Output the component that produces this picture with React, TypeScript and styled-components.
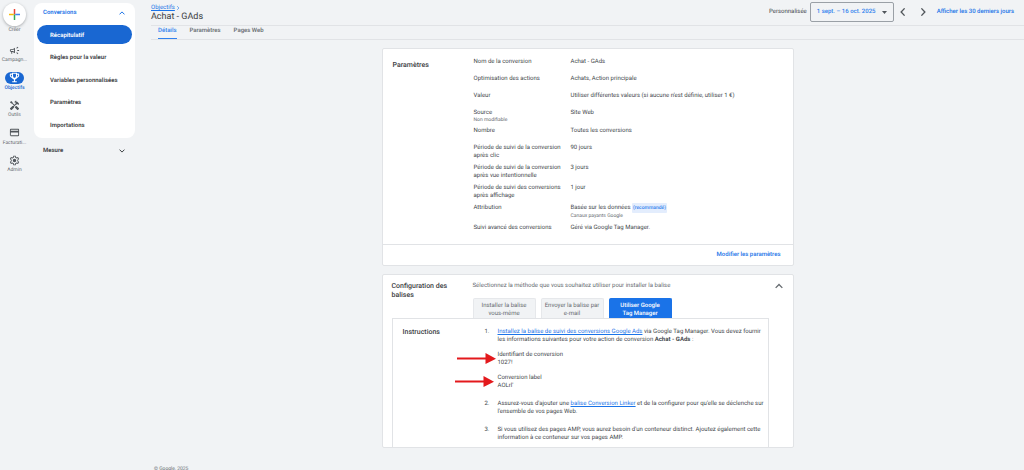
import React from 'react';
import styled, { createGlobalStyle, css } from 'styled-components';

const color = {
  page: '#f1f3f5',
  card: '#ffffff',
  line: '#e1e3e6',
  text: '#44484c',
  strong: '#3c4043',
  muted: '#666b70',
  link: '#3081ee',
  primary: '#1967d2',
  accent: '#1a73e8',
};

const GlobalStyle = createGlobalStyle`
  * { box-sizing: border-box; }
  body {
    margin: 0;
    background: ${color.page};
    color: ${color.text};
    font: 400 6px/8px Roboto, "Liberation Sans", sans-serif;
    text-rendering: geometricPrecision;
  }
  button { font: inherit; color: inherit; border: 0; padding: 0; background: none; cursor: pointer; text-rendering: inherit; }
  h1, h2, p, dl, dd, ol, ul { margin: 0; padding: 0; }
  ul, ol { list-style: none; }
  svg { display: block; }
`;

const Shell = styled.div`
  display: flex;
  height: 100vh;
  overflow: hidden;
`;

const Rail = styled.nav`
  flex: none;
  width: 29px;
  display: flex;
  flex-direction: column;
  align-items: center;
  padding-top: 3px;
`;

const CreateButton = styled.button`
  display: flex;
  flex-direction: column;
  align-items: center;
  gap: 1px;
  font-size: 5px;
  line-height: 7px;
  color: ${color.muted};
`;

const CreateDisc = styled.span`
  display: grid;
  place-items: center;
  width: 23px;
  height: 23px;
  border-radius: 50%;
  background: ${color.card};
  box-shadow: 0 1px 3px rgba(60, 64, 67, 0.4);
`;

const RailList = styled.ul`
  display: flex;
  flex-direction: column;
  justify-content: space-between;
  height: 130px;
  margin-top: 10px;
`;

const RailLink = styled.a<{ $active?: boolean }>`
  display: flex;
  flex-direction: column;
  align-items: center;
  gap: 1px;
  font-size: 5px;
  line-height: 7px;
  font-weight: ${p => (p.$active ? 500 : 400)};
  color: ${p => (p.$active ? color.primary : color.muted)};
  text-decoration: none;
`;

const RailPill = styled.span<{ $active?: boolean }>`
  display: grid;
  place-items: center;
  width: 19px;
  height: 12px;
  border-radius: 6px;
  background: ${p => (p.$active ? color.primary : 'transparent')};
  color: ${p => (p.$active ? '#fff' : '#50555a')};
`;

const Side = styled.aside`
  flex: none;
  width: 101px;
  margin: 3px 16px 0 5px;
  font-weight: 600;
`;

const SidePanel = styled.section`
  height: 135px;
  padding: 0 3px;
  border-radius: 8px;
  background: ${color.card};
`;

const SideHead = styled.button<{ $open?: boolean }>`
  display: flex;
  width: 100%;
  align-items: center;
  justify-content: space-between;
  height: 19px;
  padding: 1px 7px 0 6px;
  font-weight: 600;
  color: ${p => (p.$open ? color.accent : color.strong)};
`;

const SideGroup = styled.div`
  padding: 3px 3px 0;
`;

const SideList = styled.ul`
  display: flex;
  flex-direction: column;
  justify-content: space-between;
  height: 109px;
  margin-top: 3px;
`;

const SideLink = styled.a<{ $active?: boolean }>`
  display: flex;
  align-items: center;
  height: 19px;
  padding: 2px 0 0 13px;
  border-radius: 10px;
  text-decoration: none;
  color: ${color.strong};
  ${p => p.$active && css`
    background: ${color.primary};
    color: #fff;
  `}
`;

const Main = styled.main`
  flex: 1;
  min-width: 0;
`;

const TopBar = styled.header`
  display: flex;
  justify-content: space-between;
  height: 26px;
  border-bottom: 1px solid ${color.line};
`;

const Heading = styled.div`
  padding-top: 4px;
`;

const Crumb = styled.div`
  display: flex;
  align-items: center;
  gap: 1px;
  line-height: 7px;
  color: ${color.link};
`;

const Title = styled.h1`
  padding-top: 1px;
  font: 400 9px/11px Roboto, sans-serif;
  color: ${color.strong};
`;

const DateTools = styled.div`
  display: flex;
  align-items: flex-start;
  padding: 2px 10px 0 0;
  line-height: 20px;
`;

const DateButton = styled.button`
  display: flex;
  align-items: center;
  justify-content: space-between;
  width: 84px;
  height: 20px;
  margin: 0 3px;
  padding: 0 6px;
  border: 1px solid #9aa0a6;
  border-radius: 2px;
  font-weight: 500;
  color: ${color.link};
`;

const StepButton = styled.button`
  display: grid;
  place-items: center;
  width: 12px;
  height: 20px;
  margin-right: 8px;
  color: #50555a;
`;

const TextLink = styled.a`
  font-weight: 500;
  text-decoration: none;
  color: ${color.accent};
`;

const InlineLink = styled.a`
  color: ${color.accent};
`;

const Tabs = styled.nav`
  display: flex;
  gap: 13px;
  height: 14px;
  padding-left: 7px;
  border-bottom: 1px solid ${color.line};
`;

const Tab = styled.a<{ $active?: boolean }>`
  height: 13px;
  padding-top: 1px;
  font-weight: 500;
  text-decoration: none;
  color: ${p => (p.$active ? color.link : color.muted)};
  border-bottom: 1px solid ${p => (p.$active ? color.link : 'transparent')};
`;

const Cards = styled.div`
  display: flex;
  flex-direction: column;
  gap: 8px;
  width: 100%;
  max-width: 412px;
  margin: 8px auto 0;
`;

const Card = styled.section`
  border: 1px solid ${color.line};
  border-radius: 2px;
  background: ${color.card};
`;

const CardBody = styled.div`
  display: grid;
  grid-template-columns: 81px 1fr;
  padding: 9px 9px 0 10px;
`;

const CardTitle = styled.h2`
  padding-right: 16px;
  font: 500 7px/9px Roboto, sans-serif;
  color: ${color.strong};
`;

const ParamTitle = styled(CardTitle)`
  padding-top: 3px;
`;

const Params = styled.dl`
  padding-bottom: 3px;
`;

const Param = styled.div`
  display: grid;
  grid-template-columns: 92px 1fr;
  column-gap: 5px;
  min-height: 17px;
  padding-bottom: 4px;
`;

const Note = styled.div<{ $tall?: boolean }>`
  font-size: 5px;
  line-height: ${p => (p.$tall ? 8 : 6)}px;
  color: ${color.muted};
`;

const Chip = styled.span`
  padding: 2px 1px;
  border-radius: 1px;
  background: #e3edfd;
  color: ${color.link};
  font-size: 5px;
  font-weight: 500;
`;

const CardFoot = styled.footer`
  display: flex;
  align-items: center;
  justify-content: flex-end;
  height: 21px;
  padding: 0 12px;
  border-top: 1px solid ${color.line};
`;

const SetupHead = styled.div`
  display: flex;
  justify-content: space-between;
  line-height: 8px;
  padding-right: 1px;
  color: ${color.muted};
`;

const SetupBody = styled(CardBody)`
  padding: 7px 9px 0;
`;

const Methods = styled.div`
  display: flex;
  gap: 5px;
  margin-top: 8px;
`;

const Method = styled.button<{ $active?: boolean }>`
  width: 63px;
  height: 20px;
  padding: 3px 2px 0;
  border-radius: 2px 2px 0 0;
  line-height: 8px;
  text-align: center;
  border: 1px solid ${p => (p.$active ? color.accent : '#e6e8eb')};
  border-bottom: 0;
  background: ${p => (p.$active ? color.accent : color.page)};
  color: ${p => (p.$active ? '#fff' : color.muted)};
  font-weight: ${p => (p.$active ? 500 : 400)};
`;

const Instructions = styled.div`
  display: grid;
  grid-template-columns: 82px 1fr;
  margin: 0 24px 0 9px;
  padding: 9px 0 5px 10px;
  border: 1px solid ${color.line};
  border-bottom: 0;
`;

const Steps = styled.ol`
  display: flex;
  flex-direction: column;
  gap: 10px;
`;

const Step = styled.li`
  display: grid;
  grid-template-columns: 13px 1fr;
`;

const Field = styled.div`
  position: relative;
  margin-top: 7px;
`;

const Pointer = styled.svg<{ $shift: number }>`
  position: absolute;
  top: 2px;
  left: ${p => p.$shift}px;
`;

const Copyright = styled.footer`
  margin: 18px 0 0 3px;
  font-size: 5px;
  line-height: 7px;
  color: ${color.muted};
`;

const Chevron = ({ d, w = 6, h = 6 }: { d: string; w?: number; h?: number }) => (
  <svg width={w} height={h} viewBox="0 0 6 6" fill="none" stroke="currentColor" strokeWidth="1" aria-hidden="true">
    <path d={d} />
  </svg>
);
const UP = 'M.5 4.4 3 1.9l2.5 2.5';
const DOWN = 'M.5 1.6 3 4.1l2.5-2.5';
const LEFT = 'M4.2.3 1.6 3l2.6 2.7';
const RIGHT = 'M1.8.3 4.4 3 1.8 5.7';

const Glyph = ({ d }: { d: string }) => (
  <svg width="11" height="11" viewBox="0 0 24 24" fill="currentColor" aria-hidden="true">
    <path fillRule="evenodd" d={d} />
  </svg>
);

const railItems = [
  {
    label: 'Campagn...',
    d: 'M18 11v2h4v-2h-4zm-2 6.6c1 .7 2.200 1.650 3.200 2.400.4-.53.8-1.070 1.200-1.600-1-.75-2.240-1.700-3.200-2.400-.4.54-.8 1.080-1.200 1.600zM20.400 5.600 19.200 4c-1 .75-2.240 1.700-3.200 2.400l1.200 1.600c1-.7 2.240-1.650 3.200-2.400zM4 9c-1.100 0-2 .9-2 2v2c0 1.100.9 2 2 2h1v4h2v-4h1l5 3V6L8 9H4zm5.030 1.710L11 9.530v4.940l-1.970-1.180-.48-.29H4v-2h4.550l.48-.29z',
  },
  {
    label: 'Objectifs',
    active: true,
    d: 'M20 3.500h-2.500V1.500h-11v2H4c-1.300 0-2.300 1-2.300 2.300v1.500c0 2.900 2.100 5.200 4.900 5.600.8 1.700 2.400 3 4.200 3.400V20H7v2.500h10V20h-3.800v-3.700c1.800-.4 3.400-1.700 4.200-3.400 2.800-.4 4.900-2.700 4.900-5.600V5.800c0-1.300-1-2.300-2.300-2.300zM4 7.300V5.800h2.500v4.500C5 9.900 4 8.700 4 7.300zm6.500 5.200L8.800 9V4h6.400v5l-1.700 3.500zM20 7.300c0 1.400-1 2.600-2.500 3V5.800H20z',
  },
  {
    label: 'Outils',
    d: 'm21.670 18.170-5.300-5.300h-.99l-2.540 2.540v.99l5.300 5.300c.39.39 1.020.39 1.410 0l2.120-2.120c.39-.38.39-1.020 0-1.410zM17.340 10.190l1.410-1.410 2.120 2.120c1.170-1.170 1.170-3.070 0-4.240l-3.540-3.540-1.410 1.410V1.710L15.220 1l-3.540 3.540.71.71h2.830l-1.410 1.410 1.060 1.060-2.890 2.890-4.130-4.130V5.060L4.830 2.040 2 4.870 5.030 7.900h1.410l4.130 4.130-.85.85H7.600l-5.300 5.300c-.39.39-.39 1.020 0 1.410l2.120 2.120c.39.39 1.020.39 1.410 0l5.300-5.300v-2.120l5.150-5.150 1.060 1.050z',
  },
  {
    label: 'Facturati...',
    d: 'M20 4H4c-1.110 0-2 .89-2 2v12c0 1.110.89 2 2 2h16c1.110 0 2-.89 2-2V6c0-1.110-.89-2-2-2zm0 14H4v-6h16v6zm0-10H4V6h16v2z',
  },
  {
    label: 'Admin',
    d: 'M9.500 1.500h5l.7 3 1.500.9 3-.9 2.500 4.300-2.300 2.100v2.200l2.300 2.100-2.500 4.300-3-.9-1.500.9-.7 3h-5l-.7-3-1.500-.9-3 .9-2.500-4.300 2.300-2.100v-2.200L1.800 8.800l2.500-4.300 3 .9 1.500-.9zM11 3.500l-.6 2.600-3 1.700-2.400-.7-1 1.700 1.900 1.700v3l-1.900 1.700 1 1.700 2.400-.7 3 1.700.6 2.600h2l.6-2.600 3-1.700 2.400.7 1-1.700-1.900-1.700v-3L20 8.800l-1-1.700-2.400.7-3-1.700-.6-2.600zM12 8.200a3.800 3.800 0 1 1 0 7.600 3.800 3.800 0 0 1 0-7.600z',
  },
];

const sideItems = ['Récapitulatif', 'Règles pour la valeur', 'Variables personnalisées', 'Paramètres', 'Importations'];

const params: { label: string; note?: string; value: React.ReactNode }[] = [
  { label: 'Nom de la conversion', value: 'Achat - GAds' },
  { label: 'Optimisation des actions', value: 'Achats, Action principale' },
  { label: 'Valeur', value: "Utiliser différentes valeurs (si aucune n'est définie, utiliser 1 €)" },
  { label: 'Source', note: 'Non modifiable', value: 'Site Web' },
  { label: 'Nombre', value: 'Toutes les conversions' },
  { label: 'Période de suivi de la conversion après clic', value: '90 jours' },
  { label: 'Période de suivi de la conversion après vue intentionnelle', value: '3 jours' },
  { label: 'Période de suivi des conversions après affichage', value: '1 jour' },
  {
    label: 'Attribution',
    value: (
      <>
        Basée sur les données <Chip>(recommandé)</Chip>
        <Note $tall>Canaux payants Google</Note>
      </>
    ),
  },
  { label: 'Suivi avancé des conversions', value: 'Géré via Google Tag Manager.' },
];

const Arrow = ({ shift }: { shift: number }) => (
  <Pointer $shift={shift} width="39" height="12" viewBox="0 0 39 12" aria-hidden="true">
    <path d="M0 5.500h29" stroke="#e3191c" strokeWidth="2" />
    <path d="M28.500 0 39 5.700 28.500 11z" fill="#e3191c" />
  </Pointer>
);

export default function App() {
  return (
    <>
      <GlobalStyle />
      <Shell>
        <Rail aria-label="Navigation principale">
          <CreateButton>
            <CreateDisc>
              <svg width="11" height="11" viewBox="0 0 11 11" aria-hidden="true">
                <path d="M4.750 0h1.500v5.500h-1.500z" fill="#ea4335" />
                <path d="M0 4.750h4.750v1.500H0z" fill="#fbbc04" />
                <path d="M4.750 5.500h1.500V11h-1.500z" fill="#34a853" />
                <path d="M6.250 4.750H11v1.500H6.250z" fill="#4285f4" />
              </svg>
            </CreateDisc>
            Créer
          </CreateButton>
          <RailList>
            {railItems.map(item => (
              <li key={item.label}>
                <RailLink href="#" $active={item.active}>
                  <RailPill $active={item.active}>
                    <Glyph d={item.d} />
                  </RailPill>
                  {item.label}
                </RailLink>
              </li>
            ))}
          </RailList>
        </Rail>

        <Side>
          <SidePanel>
            <SideHead $open aria-expanded="true">
              Conversions
              <Chevron d={UP} />
            </SideHead>
            <SideList>
              {sideItems.map((label, i) => (
                <li key={label}>
                  <SideLink href="#" $active={i === 0}>{label}</SideLink>
                </li>
              ))}
            </SideList>
          </SidePanel>
          <SideGroup>
            <SideHead aria-expanded="false">
              Mesure
              <Chevron d={DOWN} />
            </SideHead>
          </SideGroup>
        </Side>

        <Main>
          <TopBar>
            <Heading>
              <Crumb>
                <InlineLink href="#">Objectifs</InlineLink>
                <Chevron d={RIGHT} w={4} h={4} />
              </Crumb>
              <Title>Achat - GAds</Title>
            </Heading>
            <DateTools>
              Personnalisée
              <DateButton>
                1 sept. – 16 oct. 2025
                <svg width="5" height="3" viewBox="0 0 5 3" aria-hidden="true">
                  <path d="M0 0h5L2.500 3z" fill="#50555a" />
                </svg>
              </DateButton>
              <StepButton aria-label="Période précédente"><Chevron d={LEFT} w={8} h={8} /></StepButton>
              <StepButton aria-label="Période suivante"><Chevron d={RIGHT} w={8} h={8} /></StepButton>
              <TextLink href="#">Afficher les 30 derniers jours</TextLink>
            </DateTools>
          </TopBar>
          <Tabs>
            <Tab href="#" $active>Détails</Tab>
            <Tab href="#">Paramètres</Tab>
            <Tab href="#">Pages Web</Tab>
          </Tabs>

          <Cards>
            <Card>
              <CardBody>
                <ParamTitle>Paramètres</ParamTitle>
                <Params>
                  {params.map(p => (
                    <Param key={p.label}>
                      <dt>
                        {p.label}
                        {p.note && <Note>{p.note}</Note>}
                      </dt>
                      <dd>{p.value}</dd>
                    </Param>
                  ))}
                </Params>
              </CardBody>
              <CardFoot>
                <TextLink href="#">Modifier les paramètres</TextLink>
              </CardFoot>
            </Card>

            <Card>
              <SetupBody>
                <CardTitle>Configuration des balises</CardTitle>
                <div>
                  <SetupHead>
                    Sélectionnez la méthode que vous souhaitez utiliser pour installer la balise
                    <button aria-label="Réduire"><Chevron d={UP} w={8} h={8} /></button>
                  </SetupHead>
                  <Methods>
                    <Method>Installer la balise<br />vous-même</Method>
                    <Method>Envoyer la balise par<br />e-mail</Method>
                    <Method $active>Utiliser Google<br />Tag Manager</Method>
                  </Methods>
                </div>
              </SetupBody>
              <Instructions>
                <CardTitle>Instructions</CardTitle>
                <Steps>
                  <Step>
                    <span>1.</span>
                    <div>
                      <p>
                        <InlineLink href="#">Installez la balise de suivi des conversions Google Ads</InlineLink> via
                        Google Tag Manager. Vous devez fournir<br />
                        les informations suivantes pour votre action de conversion <b>Achat - GAds</b> :
                      </p>
                      <Field>
                        <Arrow shift={-41} />
                        <p>Identifiant de conversion</p>
                        <p>1027!</p>
                      </Field>
                      <Field>
                        <Arrow shift={-43} />
                        <p>Conversion label</p>
                        <p>AOLrl'</p>
                      </Field>
                    </div>
                  </Step>
                  <Step>
                    <span>2.</span>
                    <p>
                      Assurez-vous d'ajouter une <InlineLink href="#">balise Conversion Linker</InlineLink> et de la
                      configurer pour qu'elle se déclenche sur<br />
                      l'ensemble de vos pages Web.
                    </p>
                  </Step>
                  <Step>
                    <span>3.</span>
                    <p>
                      Si vous utilisez des pages AMP, vous aurez besoin d'un conteneur distinct. Ajoutez également
                      cette<br />
                      information à ce conteneur sur vos pages AMP.
                    </p>
                  </Step>
                </Steps>
              </Instructions>
            </Card>
          </Cards>
          <Copyright>© Google, 2025</Copyright>
        </Main>
      </Shell>
    </>
  );
}
